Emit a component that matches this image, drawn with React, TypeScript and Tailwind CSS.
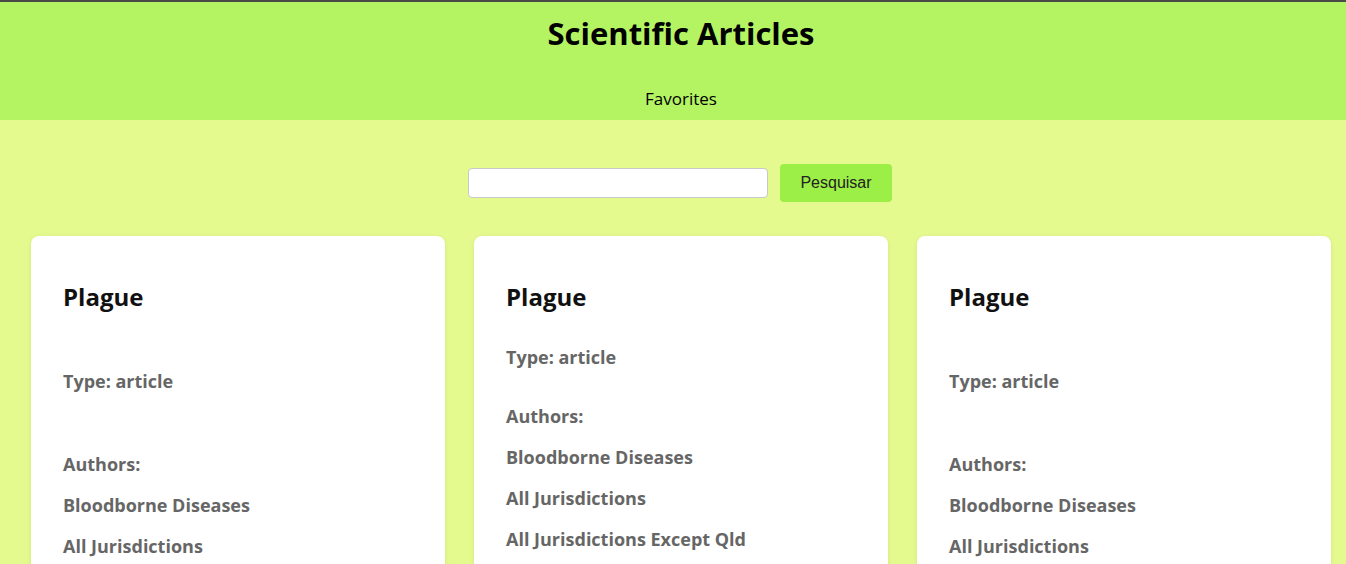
const authorsA = ["Bloodborne Diseases", "All Jurisdictions", "All Jurisdictions Except Qld"];

function ArticleCard({ spread, authors }: { spread: boolean; authors: string[] }) {
  return (
    <div className="w-[414px] shrink-0 rounded-lg bg-white px-8 pb-16 pt-[43px] shadow-[0_1px_4px_rgba(0,0,0,0.08)]">
      <h2 className="text-[24px] font-bold leading-9 text-[#111]">Plague</h2>
      <p className={`${spread ? "mt-[52px]" : "mt-[28px]"} text-[18px] font-bold leading-[28px] text-[#666]`}>
        Type: article
      </p>
      <div className={`${spread ? "mt-[55px]" : "mt-[31px]"} flex flex-col gap-[13px] text-[18px] font-bold leading-[28px] text-[#666]`}>
        <p>Authors:</p>
        {authors.map((a) => (
          <p key={a}>{a}</p>
        ))}
      </div>
    </div>
  );
}

export default function App() {
  return (
    <div className="h-[564px] overflow-hidden bg-[#e4fa8e] font-['Open_Sans',sans-serif]">
      <header className="flex h-[120px] flex-col items-center border-t-2 border-[#4a4a4a] bg-[#b4f462] pl-4">
        <h1 className="mt-[11px] text-[31px] font-bold leading-[40px] text-black">Scientific Articles</h1>
        <nav className="mt-[34px] text-[17px] leading-6 text-black">Favorites</nav>
      </header>

      <div className="mt-[44px] flex items-center justify-center gap-3 pl-[14px]">
        <input
          type="text"
          className="h-[30px] w-[300px] rounded border border-[#c8c8c8] bg-white px-2"
        />
        <button className="h-[38px] w-[112px] rounded bg-[#9cef46] font-['Liberation_Sans',sans-serif] text-[16px] text-[#222]">
          Pesquisar
        </button>
      </div>

      <div className="mt-[34px] flex items-start gap-[29px] pl-[31px]">
        <ArticleCard spread authors={authorsA.slice(0, 2)} />
        <ArticleCard spread={false} authors={authorsA} />
        <ArticleCard spread authors={authorsA.slice(0, 2)} />
      </div>
    </div>
  );
}
